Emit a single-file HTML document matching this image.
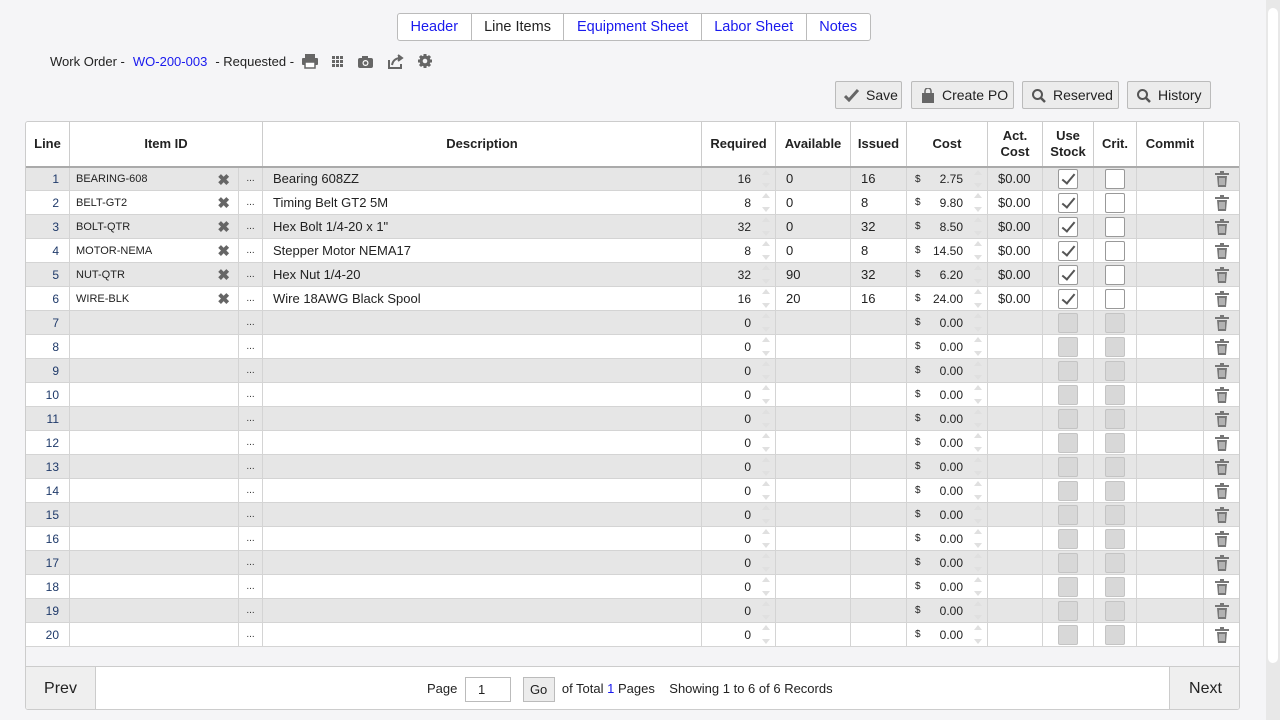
<!DOCTYPE html>
<html><head><meta charset="utf-8"><style>
*{box-sizing:border-box}
body{margin:0;width:1280px;height:720px;background:#f5f5f7;font-family:"Liberation Sans",sans-serif;color:#222;position:relative;overflow:hidden;font-size:13px}
.tabs{position:absolute;left:397px;top:13px;height:28px;display:flex;border:1px solid #bbb;border-radius:3px;background:#fff}
.tabs div{padding:0 12.5px;line-height:27px;font-size:14.5px;color:#1a1aee;border-left:1px solid #bbb}
.tabs div:first-child{border-left:none}
.tabs .act{color:#222}
.wo{position:absolute;left:50px;top:53px;font-size:13px;line-height:16px}
.wo a{color:#1a1aee;margin:0 8px}
.btn{position:absolute;top:81px;height:28px;border:1px solid #bbb;background:#ececec;border-radius:2px;font-size:14px;line-height:26px;padding-left:30px;color:#222}
.btn svg{position:absolute;left:8px;top:6px}
.sb{position:absolute;left:1266px;top:0;width:14px;height:720px;background:#e8e8e8}
.sb i{position:absolute;left:2px;top:8px;width:10px;height:655px;background:#fff;border-radius:5px}
.tbl{position:absolute;left:25px;top:121px;width:1215px;height:589px;border:1px solid #ccc;border-radius:3px;background:#f4f4f6;overflow:hidden}
table{border-collapse:collapse;table-layout:fixed;width:1215px;margin-left:-1px;margin-top:-1px}
th{background:#fff;height:45px;font-size:13px;font-weight:bold;border:1px solid #ccc;border-bottom:2px solid #aaa;line-height:16px;padding:0}
td{height:24px;border:1px solid #d4d4d4;padding:0;position:relative;font-size:13px;white-space:nowrap;overflow:hidden}
tr.o td{background:#e6e6e6}
tr.e td{background:#fff}
td.ln{text-align:right;padding-right:10px;color:#1f3a6a;font-size:12px}
td.id{font-size:11px;padding-left:6px}
td.id b{position:absolute;right:8px;top:3px;color:#666;font-size:15px;font-weight:bold}
td.dt{text-align:center;font-size:10px;color:#333}
td.ds{padding-left:10px}
td.rq{text-align:right;padding-right:24px;font-size:12px}
.sp:before{content:"";position:absolute;right:5px;top:2px;border:4px solid transparent;border-bottom:5px solid #e0e0e0;border-top:0}
.sp:after{content:"";position:absolute;right:5px;bottom:2px;border:4px solid transparent;border-top:5px solid #e0e0e0;border-bottom:0}
td.av{padding-left:10px}
td.co{text-align:right;padding-right:24px;font-size:12px}
td.co s{text-decoration:none;position:absolute;left:8px;top:6px;font-size:10px}
td.ac{padding-left:10px}
td.cb{text-align:center}
.ck{display:inline-block;width:20px;height:20px;border:1px solid #999;border-radius:2px;background:#fff;vertical-align:middle;position:relative}
.ck.g{background:#d8d8d8;border-color:#c4c4c4}
.ck.c:after{content:"";position:absolute;left:6px;top:1px;width:5px;height:11px;border:solid #555;border-width:0 2.5px 2.5px 0;transform:rotate(40deg)}
td.tr{text-align:center}
.foot{position:absolute;left:0;top:544px;width:1215px;height:45px;background:#fff;border-top:1px solid #ccc}
.pv{position:absolute;left:0;top:0;width:70px;height:44px;background:#efefef;border-right:1px solid #ccc;font-size:16px;line-height:44px;text-align:center}
.nx{position:absolute;right:0;top:0;width:72px;height:44px;background:#efefef;border-left:1px solid #ccc;font-size:16px;line-height:44px;text-align:center}
</style></head><body>
<div class="tabs"><div>Header</div><div class="act">Line Items</div><div>Equipment Sheet</div><div>Labor Sheet</div><div>Notes</div></div>
<div class="wo">Work Order -<a>WO-200-003</a>- Requested -
<svg width="140" height="16" style="vertical-align:-3px;margin-left:4px" fill="#666"><rect x="3" y="1" width="10" height="4"/><rect x="0" y="5" width="16" height="7" rx="1"/><rect x="3" y="9" width="10" height="6" fill="#fff" stroke="#666" stroke-width="1.5"/>
<g transform="translate(30,3)"><rect x="0" y="0" width="3" height="3"/><rect x="4" y="0" width="3" height="3"/><rect x="8" y="0" width="3" height="3"/><rect x="0" y="4" width="3" height="3"/><rect x="4" y="4" width="3" height="3"/><rect x="8" y="4" width="3" height="3"/><rect x="0" y="8" width="3" height="3"/><rect x="4" y="8" width="3" height="3"/><rect x="8" y="8" width="3" height="3"/></g>
<g transform="translate(56,2)"><rect x="0" y="3" width="15" height="10" rx="2"/><rect x="4" y="1" width="6" height="3"/><circle cx="7.5" cy="8" r="3" fill="#fff"/><circle cx="7.5" cy="8" r="1.8"/></g>
<g transform="translate(86,1)" fill="none" stroke="#666" stroke-width="2"><path d="M1 6v8h12v-4"/><path d="M4 11c1-5 4-7 9-7"/><path d="M10 1l4 3-4 3" fill="#666"/></g>
<g transform="translate(115,0)"><g stroke="#666" stroke-width="3"><path d="M8 1v14M1 8h14M3 3l10 10M13 3l-10 10"/></g><circle cx="8" cy="8" r="5.5"/><circle cx="8" cy="8" r="2.3" fill="#f5f5f7"/></g></svg></div>
<div class="btn" style="left:835px;width:67px"><svg width="16" height="14"><path d="M1 8l4 4 9-10" fill="none" stroke="#666" stroke-width="3"/></svg>Save</div>
<div class="btn" style="left:911px;width:103px"><svg width="16" height="16"><rect x="2" y="5" width="12" height="10" fill="#666"/><path d="M5 6V3a3 3 0 0 1 6 0v3" fill="none" stroke="#666" stroke-width="1.5"/></svg>Create PO</div>
<div class="btn" style="left:1022px;width:97px"><svg width="16" height="16"><circle cx="6.5" cy="6.5" r="4.5" fill="none" stroke="#555" stroke-width="2"/><path d="M10 10l4 4" stroke="#555" stroke-width="2.5"/></svg>Reserved</div>
<div class="btn" style="left:1127px;width:84px"><svg width="16" height="16"><circle cx="6.5" cy="6.5" r="4.5" fill="none" stroke="#555" stroke-width="2"/><path d="M10 10l4 4" stroke="#555" stroke-width="2.5"/></svg>History</div>
<div class="sb"><i></i></div>
<div class="tbl"><table>
<colgroup><col style="width:44px"><col style="width:169px"><col style="width:24px"><col style="width:439px"><col style="width:74px"><col style="width:75px"><col style="width:56px"><col style="width:81px"><col style="width:55px"><col style="width:51px"><col style="width:43px"><col style="width:67px"><col style="width:37px"></colgroup>
<tr><th>Line</th><th colspan="2">Item ID</th><th>Description</th><th>Required</th><th>Available</th><th>Issued</th><th>Cost</th><th>Act.<br>Cost</th><th>Use<br>Stock</th><th>Crit.</th><th>Commit</th><th></th></tr>
<tbody id="b">
<tr class="o"><td class="ln">1</td><td class="id">BEARING-608<b>✖</b></td><td class="dt">...</td><td class="ds">Bearing 608ZZ</td><td class="rq sp">16</td><td class="av">0</td><td class="av">16</td><td class="co sp"><s>$</s>2.75</td><td class="ac">$0.00</td><td class="cb"><span class="ck c"></span></td><td class="cb"><span class="ck"></span></td><td></td><td class="tr">🗑</td></tr>
<tr class="e"><td class="ln">2</td><td class="id">BELT-GT2<b>✖</b></td><td class="dt">...</td><td class="ds">Timing Belt GT2 5M</td><td class="rq sp">8</td><td class="av">0</td><td class="av">8</td><td class="co sp"><s>$</s>9.80</td><td class="ac">$0.00</td><td class="cb"><span class="ck c"></span></td><td class="cb"><span class="ck"></span></td><td></td><td class="tr">🗑</td></tr>
<tr class="o"><td class="ln">3</td><td class="id">BOLT-QTR<b>✖</b></td><td class="dt">...</td><td class="ds">Hex Bolt 1/4-20 x 1"</td><td class="rq sp">32</td><td class="av">0</td><td class="av">32</td><td class="co sp"><s>$</s>8.50</td><td class="ac">$0.00</td><td class="cb"><span class="ck c"></span></td><td class="cb"><span class="ck"></span></td><td></td><td class="tr">🗑</td></tr>
<tr class="e"><td class="ln">4</td><td class="id">MOTOR-NEMA<b>✖</b></td><td class="dt">...</td><td class="ds">Stepper Motor NEMA17</td><td class="rq sp">8</td><td class="av">0</td><td class="av">8</td><td class="co sp"><s>$</s>14.50</td><td class="ac">$0.00</td><td class="cb"><span class="ck c"></span></td><td class="cb"><span class="ck"></span></td><td></td><td class="tr">🗑</td></tr>
<tr class="o"><td class="ln">5</td><td class="id">NUT-QTR<b>✖</b></td><td class="dt">...</td><td class="ds">Hex Nut 1/4-20</td><td class="rq sp">32</td><td class="av">90</td><td class="av">32</td><td class="co sp"><s>$</s>6.20</td><td class="ac">$0.00</td><td class="cb"><span class="ck c"></span></td><td class="cb"><span class="ck"></span></td><td></td><td class="tr">🗑</td></tr>
<tr class="e"><td class="ln">6</td><td class="id">WIRE-BLK<b>✖</b></td><td class="dt">...</td><td class="ds">Wire 18AWG Black Spool</td><td class="rq sp">16</td><td class="av">20</td><td class="av">16</td><td class="co sp"><s>$</s>24.00</td><td class="ac">$0.00</td><td class="cb"><span class="ck c"></span></td><td class="cb"><span class="ck"></span></td><td></td><td class="tr">🗑</td></tr>
</tbody></table>
<div class="foot"><div class="pv">Prev</div>
<div style="position:absolute;left:401px;top:0;line-height:44px;font-size:13px">Page <span style="display:inline-block;width:46px;height:25px;border:1px solid #bbb;vertical-align:middle;line-height:23px;padding-left:12px;margin-left:4px;position:relative">1</span>
<span style="display:inline-block;width:32px;height:25px;border:1px solid #bbb;background:#ececec;vertical-align:middle;line-height:23px;text-align:center;margin-left:8px">Go</span> &nbsp;of Total <span style="color:#1a1aee">1</span> Pages &nbsp;&nbsp;&nbsp;Showing 1 to 6 of 6 Records</div>
<div class="nx">Next</div></div>
</div>
<script>
var b=document.getElementById('b'),h='';
for(var i=7;i<=20;i++){h+='<tr class="'+(i%2?'o':'e')+'"><td class="ln">'+i+'</td><td class="id"></td><td class="dt">...</td><td class="ds"></td><td class="rq sp">0</td><td></td><td></td><td class="co sp"><s>$</s>0.00</td><td></td><td class="cb"><span class="ck g"></span></td><td class="cb"><span class="ck g"></span></td><td></td><td class="tr">🗑</td></tr>';}
b.insertAdjacentHTML('beforeend',h);
document.querySelectorAll('.tr').forEach(function(t){t.innerHTML='<svg width="14" height="16" style="vertical-align:middle"><rect x="0" y="2" width="14" height="2" fill="#777"/><rect x="5" y="0" width="4" height="2" fill="#777"/><path d="M2 5h10l-1 11H3z" fill="#777"/><path d="M5 7v7M7 7v7M9 7v7" stroke="#eee" stroke-width="1"/></svg>';});
</script>
</body></html>
